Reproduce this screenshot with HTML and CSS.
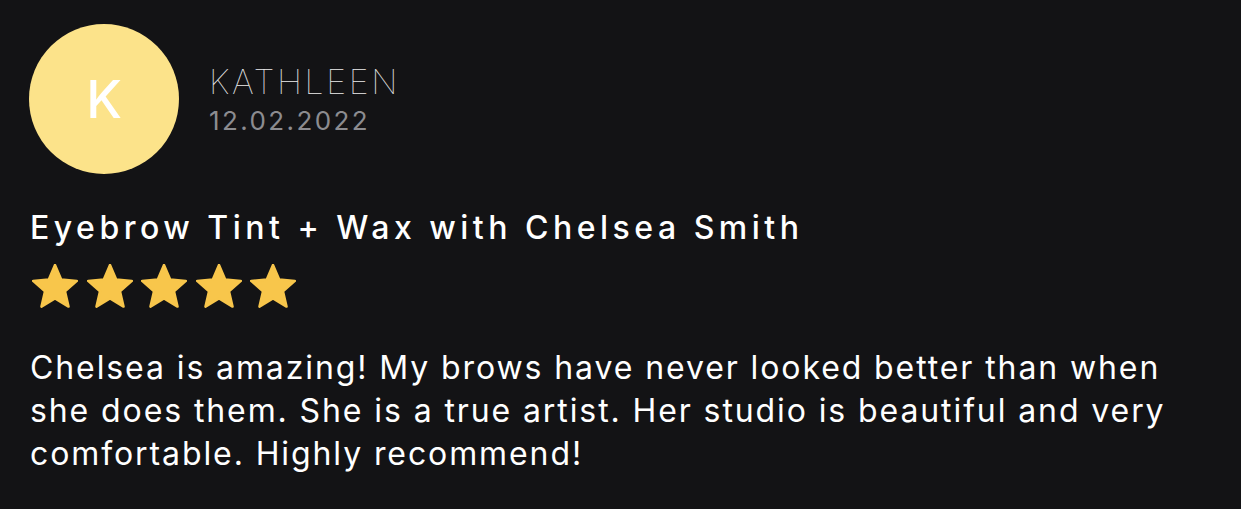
FILE: index.html
```html
<!DOCTYPE html>
<html lang="en">
<head>
    <meta charset="UTF-8">
    <meta name="viewport" content="width=device-width, initial-scale=1.0">
    <title>Review</title>
    <link rel="stylesheet" href="styles.css">
</head>
<body>
    <div class="review">
        <div class="review-header">
            <div class="avatar">K</div>
            <div class="author">
                <div class="author-name">KATHLEEN</div>
                <div class="author-date">12.02.2022</div>
            </div>
        </div>
        <h2 class="service">Eyebrow Tint + Wax with Chelsea Smith</h2>
        <div class="stars">
            <svg viewBox="0 0 46 44"><polygon points="23,1 29.17,15.51 44.87,16.89 32.99,27.24 36.52,42.61 23,34.5 9.48,42.61 13.01,27.24 1.13,16.89 16.83,15.51"/></svg>
            <svg viewBox="0 0 46 44"><polygon points="23,1 29.17,15.51 44.87,16.89 32.99,27.24 36.52,42.61 23,34.5 9.48,42.61 13.01,27.24 1.13,16.89 16.83,15.51"/></svg>
            <svg viewBox="0 0 46 44"><polygon points="23,1 29.17,15.51 44.87,16.89 32.99,27.24 36.52,42.61 23,34.5 9.48,42.61 13.01,27.24 1.13,16.89 16.83,15.51"/></svg>
            <svg viewBox="0 0 46 44"><polygon points="23,1 29.17,15.51 44.87,16.89 32.99,27.24 36.52,42.61 23,34.5 9.48,42.61 13.01,27.24 1.13,16.89 16.83,15.51"/></svg>
            <svg viewBox="0 0 46 44"><polygon points="23,1 29.17,15.51 44.87,16.89 32.99,27.24 36.52,42.61 23,34.5 9.48,42.61 13.01,27.24 1.13,16.89 16.83,15.51"/></svg>
        </div>
        <p class="review-text">Chelsea is amazing! My brows have never looked better than when she does them. She is a true artist. Her studio is beautiful and very comfortable. Highly recommend!</p>
    </div>
</body>
</html>
```

FILE: styles.css
```css
* {
    margin: 0;
    padding: 0;
    box-sizing: border-box;
    font-family: "Inter", "Liberation Sans", sans-serif;
}
body {
    background: #131315;
    color: #fff;
    min-height: 100vh;
}
.review {
    padding: 24px 30px 0 30px;
}
.review-header {
    display: flex;
    align-items: flex-start;
    gap: 30px;
}
.avatar {
    width: 150px;
    height: 150px;
    border-radius: 50%;
    background: #fce38a;
    color: #fff;
    display: flex;
    justify-content: center;
    align-items: center;
    font-size: 52px;
    font-weight: 500;
    margin-left: -1px;
}
.author {
    padding-top: 38px;
}
.author-name {
    font-size: 34px;
    font-weight: 100;
    letter-spacing: 2.6px;
    line-height: 40px;
    color: #ececec;
}
.author-date {
    margin-top: 3.5px;
    font-size: 26px;
    font-weight: 400;
    letter-spacing: 2.4px;
    line-height: 30px;
    color: #8c8c90;
}
.service {
    margin-top: 34px;
    font-size: 32px;
    font-weight: 500;
    letter-spacing: 4.5px;
    line-height: 40px;
}
.stars {
    display: flex;
    gap: 8.5px;
    margin-top: 16px;
    margin-left: 2px;
}
.stars svg {
    width: 46px;
    height: 44px;
    fill: #f8c64b;
    stroke: #f8c64b;
    stroke-width: 2.5;
    stroke-linejoin: round;
}
.review-text {
    margin-top: 38px;
    font-size: 32px;
    line-height: 43px;
    font-weight: 400;
    letter-spacing: 1.9px;
    max-width: 1170px;
}
```
